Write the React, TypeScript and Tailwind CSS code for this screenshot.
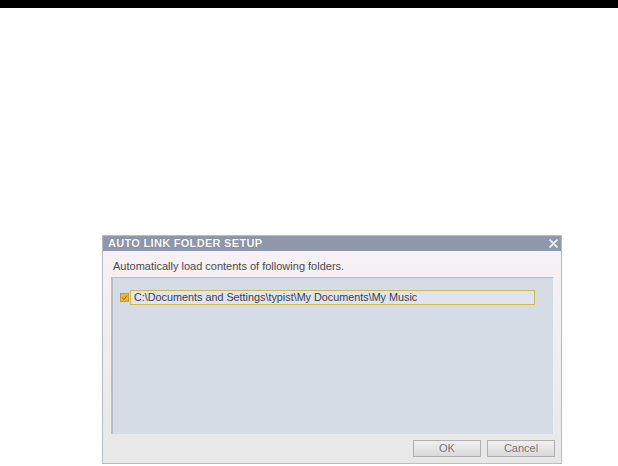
import React from 'react';

const FolderRow: React.FC<{ path: string }> = ({ path }) => (
  <div className="flex items-center">
    <div className="ml-[7px] flex h-[9px] w-[9px] items-center justify-center border border-[#c89a2a] bg-[#f2b62c]">
      <svg width="7" height="7" viewBox="0 0 7 7">
        <path d="M1 3.5 L3 5.5 L6 1.5" stroke="#8a6a10" strokeWidth="1" fill="none" />
      </svg>
    </div>
    <div className="ml-[1px] flex h-[15px] w-[405px] items-center border border-[#c9b95a] bg-[#dfe4ef] pl-[3px] text-[10.8px] leading-none text-[#3c3f48]">
      {path}
    </div>
  </div>
);

export default function App() {
  return (
    <div className="h-[466px] w-[618px] overflow-hidden bg-white" style={{ fontFamily: '"Liberation Sans", Arial, sans-serif' }}>
      <div className="h-2 bg-black" />
      <div className="ml-[102px] mt-[227px] flex h-[229px] w-[460px] flex-col border border-[#b8bcc6] bg-gradient-to-b from-[#f7f2f6] to-[#e8e8e8]">
        <div className="flex h-[15px] shrink-0 items-center justify-between bg-[#8f97ad] pl-[5px] pr-[2px]">
          <span className="text-[11px] font-bold leading-none tracking-[0.3px] text-white [text-shadow:0_0_1px_#5a6075]">
            AUTO LINK FOLDER SETUP
          </span>
          <svg width="11" height="11" viewBox="0 0 11 11">
            <path d="M1.5 1.5 L9.5 9.5 M9.5 1.5 L1.5 9.5" stroke="#e6e8ef" strokeWidth="1.8" />
          </svg>
        </div>
        <div className="pl-[10px] pt-[10px] text-[11px] leading-none text-[#4a4a4a]">
          Automatically load contents of following folders.
        </div>
        <div className="ml-[8px] mt-[5px] h-[157px] w-[443px] border-l-2 border-t border-r border-[#b9bfcb] border-r-[#eef0f4] bg-[#d5dce6] pt-[12px]">
          <FolderRow path="C:\Documents and Settings\typist\My Documents\My Music" />
        </div>
        <div className="flex flex-1 items-center justify-end gap-[6px] pr-[6px]">
          <button className="h-[17px] w-[68px] border border-[#b0b0b0] bg-gradient-to-b from-[#f0f0f0] to-[#dadada] text-[11px] leading-none text-[#777]">
            OK
          </button>
          <button className="h-[17px] w-[68px] border border-[#b0b0b0] bg-gradient-to-b from-[#f0f0f0] to-[#dadada] text-[11px] leading-none text-[#777]">
            Cancel
          </button>
        </div>
      </div>
    </div>
  );
}
